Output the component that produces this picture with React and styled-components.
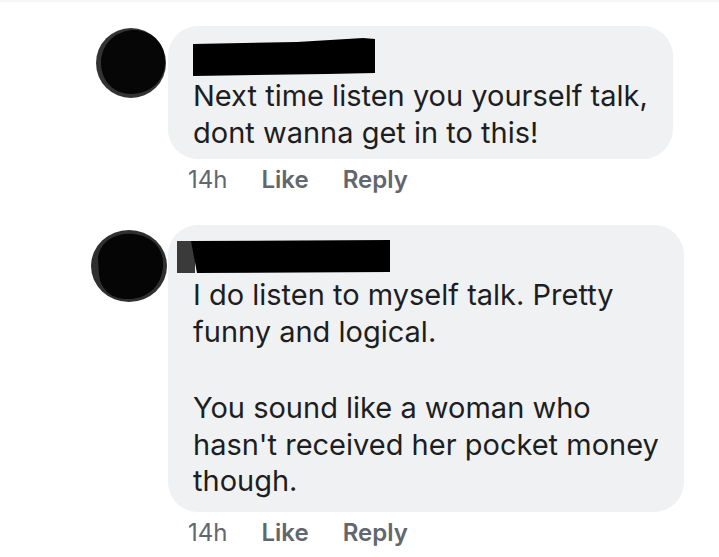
import React from 'react';
import styled, {createGlobalStyle} from 'styled-components';

const GlobalStyle = createGlobalStyle`
    body {
        margin: 0;
        background: #ffffff;
        font-family: Inter, "Liberation Sans", Arial, sans-serif;
    }
`;

const Page = styled.div`
    width: 719px;
    height: 557px;
    box-sizing: border-box;
    padding-top: 24px;
    border-top: 2px solid #f4f6f7;
    overflow: hidden;
`;

const Comment = styled.div`
    display: flex;
    align-items: flex-start;
    margin-bottom: ${props => props.$last ? 0 : 30}px;
`;

const AvatarSlot = styled.div`
    width: 168px;
    flex-shrink: 0;
    display: flex;
    justify-content: flex-end;
    padding-top: ${props => props.$offset || 0}px;
`;

const Body = styled.div`
    display: flex;
    flex-direction: column;
    align-items: flex-start;
`;

const Bubble = styled.div`
    background: #f0f1f3;
    border-radius: 30px;
    padding: 10px 25px ${props => props.$bottom || 8}px 25px;
`;

const Redaction = styled.svg`
    display: block;
    margin-left: -16px;
`;

const Text = styled.p`
    margin: 0;
    font-size: 29px;
    line-height: 36.5px;
    color: #1c1e21;
    & + & {
        margin-top: 40px;
    }
`;

const Meta = styled.div`
    display: flex;
    gap: 34px;
    margin-top: 6px;
    padding-left: 20px;
    font-size: 24px;
    line-height: 30px;
    color: #62666d;
`;

const MetaLink = styled.span`
    font-weight: ${props => props.$bold ? 600 : 400};
`;

function Avatar({variant}) {
    if (variant === 2) {
        return (
            <svg width="78" height="76" viewBox="0 0 78 76">
                <ellipse cx="39" cy="38" rx="38" ry="36" fill="#2f2f2f"/>
                <path d="M8 30 C10 12 28 4 44 6 C62 8 74 20 73 38 C72 56 60 70 40 71 C20 72 10 60 9 46 Z" fill="#050505"/>
            </svg>
        );
    }
    return (
        <svg width="73" height="74" viewBox="0 0 73 74">
            <ellipse cx="36" cy="37" rx="35" ry="35" fill="#333333"/>
            <path d="M6 34 C8 14 24 4 40 4 C58 5 70 18 70 36 C70 54 56 68 36 68 C18 68 5 54 6 34 Z" fill="#060606"/>
        </svg>
    );
}

function CommentMeta() {
    return (
        <Meta>
            <MetaLink>14h</MetaLink>
            <MetaLink $bold>Like</MetaLink>
            <MetaLink $bold>Reply</MetaLink>
        </Meta>
    );
}

export default function App() {
    return (
        <>
            <GlobalStyle/>
            <Page>
                <Comment>
                    <AvatarSlot $offset={0}>
                        <Avatar variant={1}/>
                    </AvatarSlot>
                    <Body>
                        <Bubble>
                            <Redaction width="210" height="42" viewBox="0 0 210 42">
                                <polygon points="16,8 120,6 186,2 198,3 198,37 150,38 16,40" fill="#000"/>
                            </Redaction>
                            <Text>Next time listen you yourself talk,<br/>dont wanna get in to this!</Text>
                        </Bubble>
                        <CommentMeta/>
                    </Body>
                </Comment>
                <Comment $last>
                    <AvatarSlot $offset={3}>
                        <Avatar variant={2}/>
                    </AvatarSlot>
                    <Body>
                        <Bubble $bottom={12}>
                            <Redaction width="220" height="42" viewBox="0 0 220 42">
                                <rect x="0" y="6" width="18" height="32" fill="#3a3a3a"/>
                                <polygon points="14,6 213,5 213,37 20,38" fill="#000"/>
                            </Redaction>
                            <Text>I do listen to myself talk. Pretty<br/>funny and logical.</Text>
                            <Text>You sound like a woman who<br/>hasn't received her pocket money<br/>though.</Text>
                        </Bubble>
                        <CommentMeta/>
                    </Body>
                </Comment>
            </Page>
        </>
    );
}
